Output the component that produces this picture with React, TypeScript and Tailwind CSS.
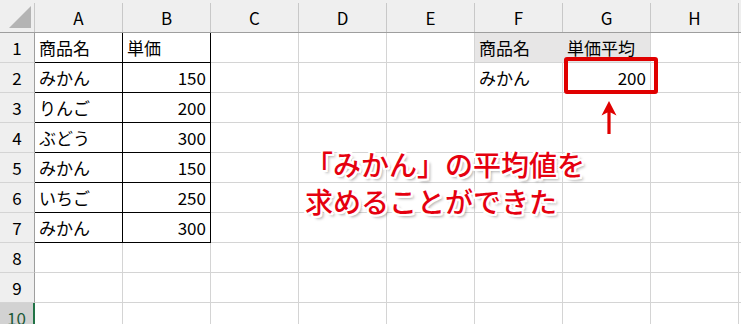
import React from "react";

type Cell = {
  text?: string;
  align?: "left" | "right";
  boxed?: boolean;
  fill?: boolean;
  fillJoinRight?: boolean;
};

const COLUMNS = ["A", "B", "C", "D", "E", "F", "G", "H"];

const items: [string, string][] = [
  ["みかん", "150"],
  ["りんご", "200"],
  ["ぶどう", "300"],
  ["みかん", "150"],
  ["いちご", "250"],
  ["みかん", "300"],
];

function buildRow(r: number): Cell[] {
  const row: Cell[] = COLUMNS.map(() => ({}));
  if (r === 1) {
    row[0] = { text: "商品名", boxed: true };
    row[1] = { text: "単価", boxed: true };
    row[5] = { text: "商品名", fill: true, fillJoinRight: true };
    row[6] = { text: "単価平均", fill: true };
  } else if (r >= 2 && r <= 7) {
    const [name, price] = items[r - 2];
    row[0] = { text: name, boxed: true };
    row[1] = { text: price, align: "right", boxed: true };
    if (r === 2) {
      row[5] = { text: "みかん" };
      row[6] = { text: "200", align: "right" };
    }
  }
  return row;
}

function GridCell({ cell }: { cell: Cell }) {
  const border = cell.boxed
    ? "border-black"
    : cell.fillJoinRight
      ? "border-r-[#e7e6e6] border-b-[#d4d4d4]"
      : "border-[#d4d4d4]";
  return (
    <div
      className={`w-[88px] h-[30px] shrink-0 border-r border-b ${border} ${
        cell.fill ? "bg-[#e7e6e6]" : "bg-white"
      } flex items-center px-[4px] ${cell.align === "right" ? "justify-end" : "justify-start"}`}
    >
      {cell.text && <span className="whitespace-nowrap leading-none">{cell.text}</span>}
    </div>
  );
}

function UpArrow() {
  return (
    <svg width="16" height="33" viewBox="0 0 16 33" className="block">
      <polygon
        points="8,0 15.5,14.5 9.6,11.5 9.6,33 6.4,33 6.4,11.5 0.5,14.5"
        fill="#e00000"
      />
    </svg>
  );
}

export default function App() {
  const rows = Array.from({ length: 10 }, (_, i) => i + 1);
  return (
    <div
      className="relative w-[741px] h-[324px] overflow-hidden bg-white text-[17px] text-black"
      style={{ fontFamily: '"Noto Sans CJK JP", "Noto Sans", sans-serif' }}
    >
      {/* column header strip */}
      <div className="flex h-[33px] bg-[#efefef] border-b border-[#9e9e9e]">
        <div className="w-[35px] shrink-0 pt-[3px]">
          <div className="h-[29px] border-r border-[#c8c8c8] flex items-end justify-end pr-[3px] pb-[4px]">
            <svg width="22" height="22" viewBox="0 0 22 22" className="block">
              <polygon points="22,0 22,22 0,22" fill="#b4b4b4" />
            </svg>
          </div>
        </div>
        {COLUMNS.map((c) => (
          <div key={c} className="w-[88px] shrink-0 pt-[3px]">
            <div className="h-[29px] border-r border-[#c8c8c8] flex items-center justify-center leading-none">
              {c}
            </div>
          </div>
        ))}
        <div className="flex-1" />
      </div>

      {/* sheet body */}
      {rows.map((r) => {
        const active = r === 10;
        return (
          <div key={r} className="flex">
            <div
              className={`w-[35px] h-[30px] shrink-0 border-b border-[#d4d4d4] flex items-center justify-center leading-none ${
                active
                  ? "bg-[#d2d2d2] border-r-2 border-r-[#217346] text-[#1d5a39]"
                  : "bg-[#efefef] border-r border-r-[#9e9e9e]"
              }`}
            >
              {r}
            </div>
            {buildRow(r).map((cell, i) => (
              <GridCell key={i} cell={cell} />
            ))}
            <div className="flex-1 h-[30px] border-b border-[#d4d4d4]" />
          </div>
        );
      })}

      {/* highlight frame around G2 */}
      <div className="absolute left-[564px] top-[57px] w-[94px] h-[37px] border-4 border-[#e00000] rounded-[3px]" />

      {/* pointer arrow */}
      <div className="absolute left-[601px] top-[101px]">
        <UpArrow />
      </div>

      {/* callout text */}
      <div
        className="absolute left-[305px] top-[146px] text-[28px] leading-[37px] font-medium text-[#e5000f] whitespace-nowrap [text-shadow:2px_0_0_#fff,-2px_0_0_#fff,0_2px_0_#fff,0_-2px_0_#fff,2px_2px_0_#fff,-2px_-2px_0_#fff,2px_-2px_0_#fff,-2px_2px_0_#fff,3px_3px_3px_rgba(0,0,0,0.35)]"
      >
        <div>「みかん」の平均値を</div>
        <div>求めることができた</div>
      </div>
    </div>
  );
}
